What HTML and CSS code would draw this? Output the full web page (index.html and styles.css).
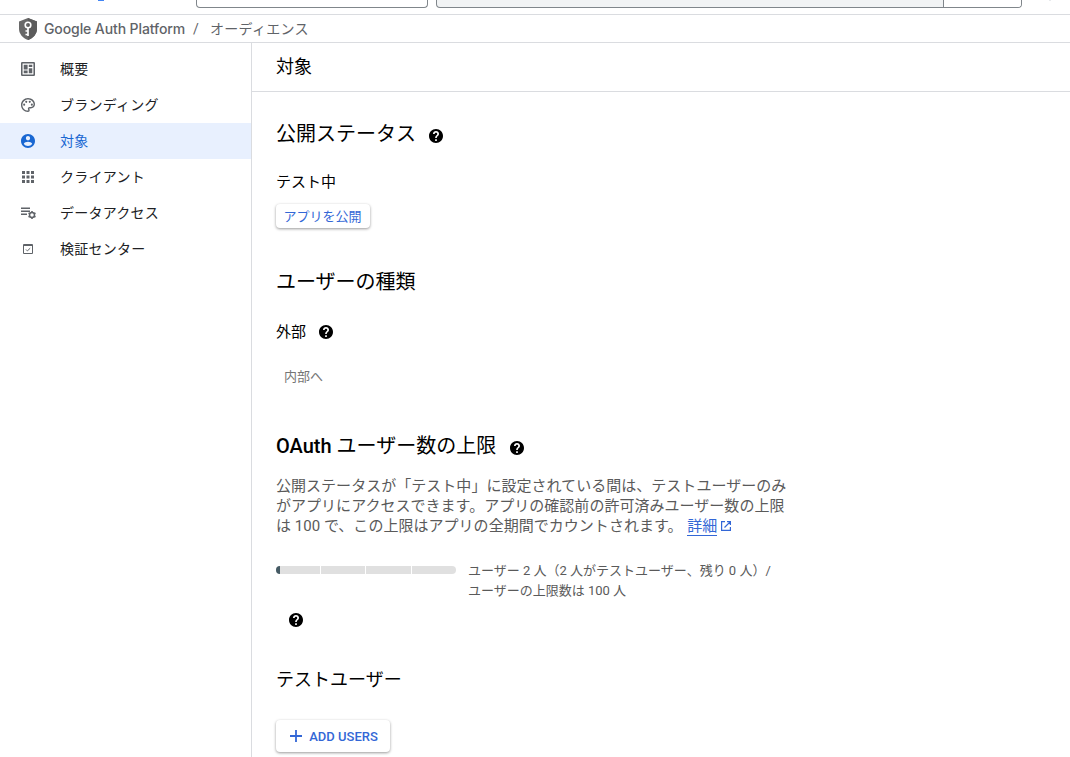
FILE: index.html
```
<!DOCTYPE html>
<html lang="ja">
<head>
    <meta charset="UTF-8">
    <meta name="viewport" content="width=device-width, initial-scale=1.0">
    <title>オーディエンス</title>
    <link rel="stylesheet" href="styles.css">
</head>
<body>
    <svg class="sprite" width="0" height="0">
        <symbol id="help" viewBox="2 2 20 20">
            <path d="M12 2C6.48 2 2 6.48 2 12s4.48 10 10 10 10-4.480 10-10S17.520 2 12 2zm1.200 17h-2.400v-2.400h2.400V19zm2.270-7.750l-.9.920C13.650 12.900 13.200 13.500 13.200 15h-2.400v-.5c0-1.100.45-2.100 1.170-2.830l1.240-1.260c.37-.36.59-.86.59-1.410 0-1.100-.8-1.800-1.800-1.800s-1.900.7-1.900 1.900H7.700c0-2.400 1.900-4.200 4.300-4.200s4.300 1.790 4.300 4c0 .88-.36 1.680-.83 2.350z"/>
        </symbol>
    </svg>

    <header class="topbar">
        <span class="logo"></span>
        <div class="picker"></div>
        <div class="search"><div class="searchButton"></div></div>
        <span class="spark"></span>
    </header>

    <nav class="breadcrumb">
        <svg class="shield" viewBox="0 0 18 22">
            <path d="M9 0l9 3.600v7.200c0 5.100-3.800 9.600-9 11.200-5.200-1.600-9-6.100-9-11.200V3.600z" fill="#686868"/>
            <path d="M9 0l9 3.600v7.200c0 5.100-3.800 9.600-9 11.200z" fill="#5c5c5c"/>
            <circle cx="9" cy="7" r="2.800" fill="none" stroke="#fff" stroke-width="1.600"/>
            <path d="M9 9.800V18M9 13H6.500M9 16.500H6.500" fill="none" stroke="#fff" stroke-width="1.700"/>
        </svg>
        <span class="product">Google Auth Platform</span>
        <span class="slash">/</span>
        <span class="crumb">オーディエンス</span>
    </nav>

    <div class="layout">
        <aside class="sidebar">
            <a class="item">
                <svg viewBox="3 3 18 18"><path fill-rule="evenodd" d="M4.500 3h15A1.500 1.500 0 0 1 21 4.500v15a1.500 1.500 0 0 1-1.500 1.500h-15A1.500 1.500 0 0 1 3 19.500v-15A1.500 1.500 0 0 1 4.500 3zM5 5v14h14V5zM6.500 6.500h5v6h-5zM13 6.500h4.500v3H13zM13 11h4.500v6.500H13zM6.500 14h5v3.500h-5z"/></svg>
                <span>概要</span>
            </a>
            <a class="item">
                <svg viewBox="2 2 20 20"><path d="M12 22C6.490 22 2 17.510 2 12S6.490 2 12 2s10 4.040 10 9c0 3.310-2.690 6-6 6h-1.770c-.28 0-.5.22-.5.5 0 .12.050.23.130.33.41.47.64 1.060.64 1.670A2.500 2.500 0 0 1 12 22zm0-18c-4.410 0-8 3.590-8 8s3.590 8 8 8c.28 0 .5-.22.5-.5a.54.54 0 0 0-.14-.35c-.41-.46-.63-1.050-.63-1.650a2.500 2.500 0 0 1 2.500-2.500H16c2.210 0 4-1.790 4-4 0-3.860-3.590-7-8-7z"/><circle cx="6.500" cy="11.500" r="1.500"/><circle cx="9.500" cy="7.500" r="1.500"/><circle cx="14.500" cy="7.500" r="1.500"/><circle cx="17.500" cy="11.500" r="1.500"/></svg>
                <span>ブランディング</span>
            </a>
            <a class="item active">
                <svg viewBox="2 2 20 20"><path d="M12 2C6.480 2 2 6.480 2 12s4.480 10 10 10 10-4.480 10-10S17.520 2 12 2zm0 3c1.660 0 3 1.340 3 3s-1.340 3-3 3-3-1.340-3-3 1.340-3 3-3zm0 14.200c-2.500 0-4.710-1.280-6-3.220.03-1.990 4-3.080 6-3.080 1.990 0 5.970 1.090 6 3.080-1.290 1.940-3.500 3.220-6 3.220z"/></svg>
                <span>対象</span>
            </a>
            <a class="item">
                <svg class="apps" viewBox="0 0 12 12"><path d="M0 0h3v3H0zM4.500 0h3v3h-3zM9 0h3v3H9zM0 4.500h3v3H0zM4.500 4.500h3v3h-3zM9 4.500h3v3H9zM0 9h3v3H0zM4.500 9h3v3h-3zM9 9h3v3H9z"/></svg>
                <span>クライアント</span>
            </a>
            <a class="item">
                <svg class="wide" viewBox="0 0 15 12"><path d="M0 .5h9V2H0zM0 3.500h9V5H0zM0 6.500h6V8H0z"/><circle cx="11" cy="8" r="2.500" fill="none" stroke="#5f6368" stroke-width="1.500"/><path d="M11 4v1.500M11 10.500V12M7.540 6l1.300.75M13.160 9.250l1.300.75M7.540 10l1.300-.75M13.160 6.750l1.300-.75" fill="none" stroke="#5f6368" stroke-width="1.600"/></svg>
                <span>データアクセス</span>
            </a>
            <a class="item">
                <svg class="box" viewBox="0 0 10 10"><path fill-rule="evenodd" d="M1 0h8a1 1 0 0 1 1 1v8a1 1 0 0 1-1 1H1a1 1 0 0 1-1-1V1a1 1 0 0 1 1-1zM1 2v7h8V2z"/><path d="M3 5.500l1.400 1.400L7.200 4.200" fill="none" stroke="#5f6368"/></svg>
                <span>検証センター</span>
            </a>
        </aside>

        <main class="main">
            <h1>対象</h1>
            <div class="content">
                <h2>公開ステータス <svg class="help"><use href="#help"/></svg></h2>
                <div class="value status">テスト中</div>
                <button class="btn publish">アプリを公開</button>

                <h2 class="typeTitle">ユーザーの種類</h2>
                <div class="value type">外部 <svg class="help"><use href="#help"/></svg></div>
                <div class="disabled">内部へ</div>

                <h2 class="capTitle"><b>OAuth</b> ユーザー数の上限 <svg class="help"><use href="#help"/></svg></h2>
                <p class="desc">公開ステータスが「テスト中」に設定されている間は、テストユーザーのみ<br>がアプリにアクセスできます。アプリの確認前の許可済みユーザー数の上限<br>は 100 で、この上限はアプリの全期間でカウントされます。 <a class="link">詳細</a><svg class="external" viewBox="0 0 10 10"><path d="M4 .6H.6v8.800h8.800V6M6 .6h3.400V4M9.400.6L3.500 6.500" fill="none" stroke="#3367d6" stroke-width="1.200"/></svg></p>

                <div class="quota">
                    <div class="bar"><i></i><i></i><i></i><i></i></div>
                    <div class="quotaText">ユーザー 2 人（2 人がテストユーザー、残り 0 人）/<br>ユーザーの上限数は 100 人</div>
                </div>
                <svg class="help quotaHelp"><use href="#help"/></svg>

                <h2 class="testTitle">テストユーザー</h2>
                <button class="btn add"><svg class="plus" viewBox="0 0 12 12"><path d="M6 0v12M0 6h12" stroke="#3367d6" stroke-width="1.800"/></svg>ADD USERS</button>
            </div>
        </main>
    </div>
</body>
</html>
```
FILE: styles.css
```
* {
    box-sizing: border-box;
}

body {
    margin: 0;
    height: 757px;
    overflow: hidden;
    background-color: #fff;
    color: #000;
    font-family: Roboto, "Noto Sans CJK JP", sans-serif;
}

.sprite {
    position: absolute;
}

.topbar {
    display: flex;
    height: 15px;
    border-bottom: 1px solid #dadce0;
}

.logo {
    width: 6px;
    height: 1px;
    margin-left: 98px;
    margin-right: 92px;
    background-color: #4285f4;
}

.picker, .search {
    height: 8px;
    border: 1px solid #80868b;
    border-top: none;
    border-radius: 0 0 4px 4px;
}

.picker {
    width: 232px;
    margin-right: 8px;
}

.search {
    display: flex;
    justify-content: flex-end;
    width: 586px;
    background-color: #f1f3f4;
}

.searchButton {
    width: 78px;
    border-left: 1px solid #80868b;
    border-radius: 0 0 3px 0;
    background-color: #fff;
}

.spark {
    width: 2px;
    height: 1px;
    margin-left: 27px;
    background-color: #e8eaed;
}

.breadcrumb {
    display: flex;
    align-items: center;
    height: 28px;
    padding-left: 19px;
    border-bottom: 1px solid #dadce0;
    color: #5f6368;
    font-size: 14px;
}

.shield {
    width: 18px;
    height: 22px;
}

.product {
    width: 141px;
    margin-left: 7px;
    font-family: Inter, sans-serif;
    font-weight: 500;
    letter-spacing: -0.1px;
    white-space: nowrap;
}

.slash {
    width: 17px;
    margin-left: 8px;
}

.crumb {
    padding-bottom: 2px;
    letter-spacing: 0.3px;
}

.layout {
    display: flex;
    height: 714px;
}

.sidebar {
    width: 252px;
    padding-top: 8px;
    border-right: 1px solid #dadce0;
}

.item {
    display: flex;
    align-items: center;
    height: 36px;
    color: #202124;
    font-size: 14px;
    letter-spacing: 0.25px;
}

.item span {
    padding-bottom: 2px;
}

.item svg {
    width: 14px;
    height: 14px;
    margin-left: 21px;
    margin-right: 25px;
    fill: #5f6368;
}

.item svg.apps {
    width: 12px;
    height: 12px;
    margin-left: 22px;
    margin-right: 26px;
}

.item svg.wide {
    width: 15px;
    height: 12px;
    margin-right: 24px;
}

.item svg.box {
    width: 10px;
    height: 10px;
    margin-left: 23px;
    margin-right: 27px;
}

.active {
    background-color: #e8f0fe;
    color: #1967d2;
}

.item.active svg {
    fill: #1967d2;
}

.main {
    flex: 1;
}

h1 {
    height: 49px;
    margin: 0;
    padding-left: 24px;
    border-bottom: 1px solid #dadce0;
    font-size: 18px;
    font-weight: 400;
    line-height: 47px;
}

.content {
    display: flex;
    flex-direction: column;
    align-items: flex-start;
    padding: 30px 0 0 24px;
}

h2 {
    display: flex;
    align-items: center;
    height: 24px;
    margin: 0;
    font-size: 20px;
    font-weight: 400;
    line-height: 24px;
    white-space: pre;
}

h2 b {
    font-weight: 500;
}

.help {
    width: 14px;
    height: 14px;
    margin-left: 13px;
}

h2 .help {
    margin-top: 4px;
    margin-left: 8px;
}

.value {
    display: flex;
    align-items: center;
    height: 20px;
    font-size: 15px;
    line-height: 20px;
}

.status {
    margin-top: 26px;
}

.btn {
    display: flex;
    align-items: center;
    justify-content: center;
    padding: 0;
    border: none;
    border-radius: 4px;
    background-color: #fff;
    box-shadow: 0 1px 3px rgba(0, 0, 0, 0.4);
    color: #3367d6;
    font-family: inherit;
    font-size: 13px;
    font-weight: 500;
}

.publish {
    width: 94px;
    height: 24px;
    margin-top: 12px;
    padding: 0 1px 2px 0;
    font-weight: 400;
}

.typeTitle {
    margin-top: 42px;
}

.type {
    margin-top: 28px;
}

.disabled {
    margin-top: 25px;
    padding-left: 8px;
    color: #757575;
    font-size: 13px;
    line-height: 20px;
}

.capTitle {
    margin-top: 47px;
}

.capTitle .help {
    margin-left: 9px;
}

.desc {
    margin: 18px 0 0;
    color: #5a5a5a;
    font-size: 15px;
    letter-spacing: 0.03px;
    line-height: 20px;
    white-space: nowrap;
}

.link {
    display: inline-block;
    height: 20px;
    margin-left: 1px;
    border-bottom: 1px solid #3367d6;
    color: #3367d6;
}

.external {
    width: 10px;
    height: 10px;
    margin-left: 4px;
}

.quota {
    display: flex;
    height: 40px;
    margin-top: 25px;
}

.bar {
    display: flex;
    gap: 1px;
    width: 180px;
    height: 8px;
    margin-top: 5px;
    margin-right: 12px;
    border-radius: 4px;
    overflow: hidden;
}

.bar i {
    flex: 1;
    background-color: #e0e0e0;
}

.bar i:first-child {
    flex: 0 0 44px;
    border-left: 4px solid #455a64;
}

.quotaText {
    color: #5a5a5a;
    font-size: 13px;
    line-height: 20px;
    white-space: nowrap;
}

.quotaHelp {
    margin-top: 12px;
}

.testTitle {
    margin-top: 41px;
    font-size: 18px;
}

.add {
    width: 114px;
    height: 32px;
    margin-top: 28px;
    padding-left: 2px;
}

.plus {
    width: 12px;
    height: 12px;
    margin-right: 7px;
}
```
